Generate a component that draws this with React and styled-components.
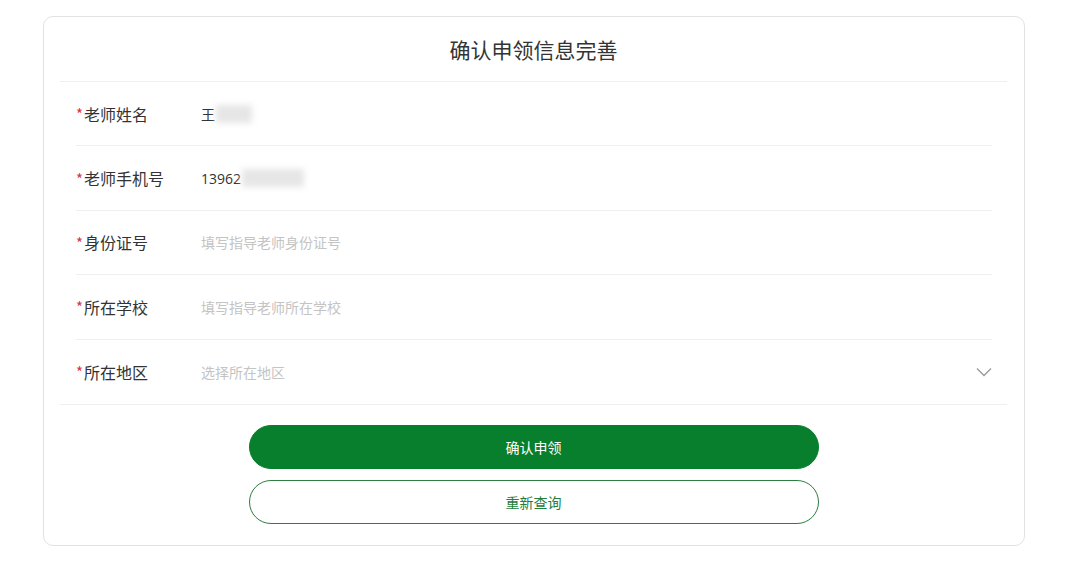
import React from "react";
import styled, { createGlobalStyle } from "styled-components";

const GlobalStyle = createGlobalStyle`
  body {
    margin: 0;
    background: #ffffff;
    font-family: "Noto Sans CJK SC", "Liberation Sans", sans-serif;
  }
`;

const Page = styled.div`
  padding: 16px 55px 27px 43px;
`;

const Card = styled.div`
  width: 982px;
  box-sizing: border-box;
  border: 1px solid #e2e2e2;
  border-radius: 10px;
  background: #fff;
  padding: 0 17px 21px 16px;
`;

const Title = styled.div`
  height: 64px;
  line-height: 64px;
  text-align: center;
  font-size: 21px;
  color: #333;
  border-bottom: 1px solid #efefef;
`;

const Rows = styled.div`
  padding: 0 15px 0 16px;
  border-bottom: 1px solid #efefef;
`;

const Row = styled.div`
  display: flex;
  align-items: center;
  height: 64.4px;
  box-sizing: border-box;
  border-bottom: ${(p) => (p.last ? "none" : "1px solid #efefef")};
`;

const Label = styled.div`
  width: 125px;
  font-size: 16px;
  color: #333;
  display: flex;
  align-items: center;
`;

const Star = styled.span`
  color: #e0313d;
  font-size: 15px;
  margin-right: 1px;
`;

const Value = styled.div`
  flex: 1;
  font-size: 14px;
  color: ${(p) => (p.placeholder ? "#c4c4c4" : "#333")};
  display: flex;
  align-items: center;
`;

const Digits = styled.span`
  font-family: "Open Sans", "Liberation Sans", sans-serif;
  font-size: 14px;
`;

const Blur = styled.span`
  display: inline-block;
  width: ${(p) => p.w}px;
  height: 18px;
  background: #e6e6e6;
  filter: blur(3px);
  margin-left: 1px;
`;

const Chevron = styled.svg`
  width: 16px;
  height: 10px;
`;

const Actions = styled.div`
  display: flex;
  flex-direction: column;
  align-items: center;
  gap: 11px;
  padding-top: 20px;
`;

const Button = styled.button`
  width: 570px;
  height: 44px;
  border-radius: 22px;
  font-family: inherit;
  font-size: 14px;
  cursor: pointer;
  border: 1px solid;
  background: ${(p) => (p.outline ? "#fff" : "#077f2c")};
  color: ${(p) => (p.outline ? "#237d3b" : "#fff")};
  border-color: ${(p) => (p.outline ? "#2c7d40" : "#077f2c")};
`;

const fields = [
  { label: "老师姓名", value: "王", blur: 36 },
  { label: "老师手机号", value: "13962", blur: 62, digits: true },
  { label: "身份证号", placeholder: "填写指导老师身份证号" },
  { label: "所在学校", placeholder: "填写指导老师所在学校" },
  { label: "所在地区", placeholder: "选择所在地区", select: true },
];

export default function App() {
  return (
    <>
      <GlobalStyle />
      <Page>
        <Card>
          <Title>确认申领信息完善</Title>
          <Rows>
            {fields.map((f, i) => (
              <Row key={f.label} last={i === fields.length - 1}>
                <Label>
                  <Star>*</Star>
                  {f.label}
                </Label>
                {f.value ? (
                  <Value>
                    {f.digits ? <Digits>{f.value}</Digits> : f.value}
                    <Blur w={f.blur} />
                  </Value>
                ) : (
                  <Value placeholder>{f.placeholder}</Value>
                )}
                {f.select && (
                  <Chevron viewBox="0 0 16 10">
                    <path d="M1 1.5l7 7 7-7" fill="none" stroke="#999" strokeWidth="1.3" />
                  </Chevron>
                )}
              </Row>
            ))}
          </Rows>
          <Actions>
            <Button>确认申领</Button>
            <Button outline>重新查询</Button>
          </Actions>
        </Card>
      </Page>
    </>
  );
}
